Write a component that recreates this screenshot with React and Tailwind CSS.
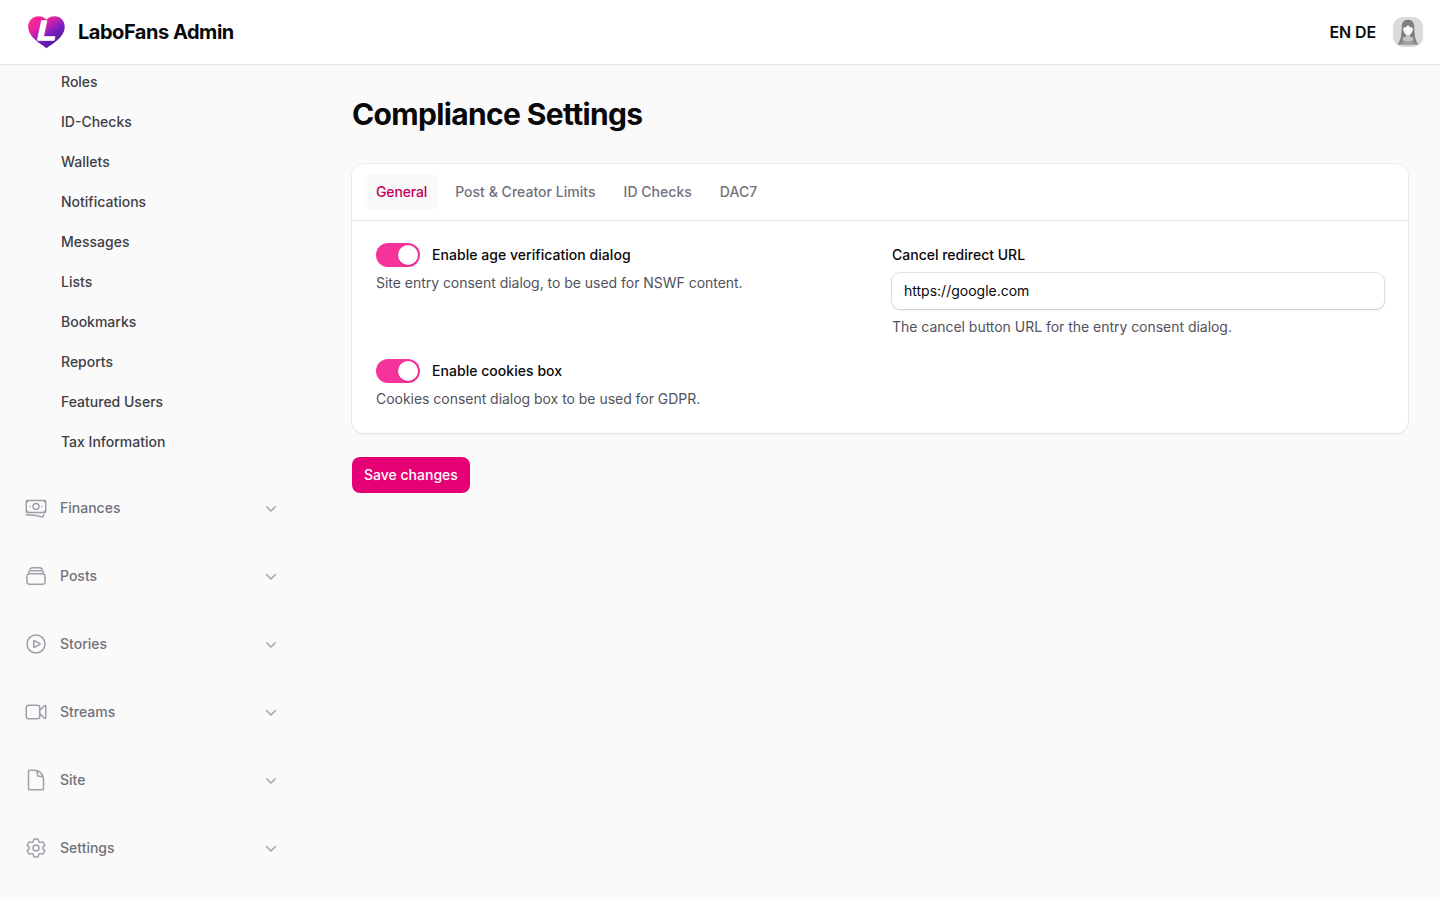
import React, { useState } from 'react';
import {
  HiOutlineBanknotes,
  HiOutlineRectangleStack,
  HiOutlinePlayCircle,
  HiOutlineVideoCamera,
  HiOutlineDocument,
  HiOutlineCog6Tooth,
  HiMiniChevronDown,
} from 'react-icons/hi2';

const userLinks = [
  'Roles',
  'ID-Checks',
  'Wallets',
  'Notifications',
  'Messages',
  'Lists',
  'Bookmarks',
  'Reports',
  'Featured Users',
  'Tax Information',
];

const groups = [
  { label: 'Finances', icon: HiOutlineBanknotes },
  { label: 'Posts', icon: HiOutlineRectangleStack },
  { label: 'Stories', icon: HiOutlinePlayCircle },
  { label: 'Streams', icon: HiOutlineVideoCamera },
  { label: 'Site', icon: HiOutlineDocument },
  { label: 'Settings', icon: HiOutlineCog6Tooth },
];

const tabs = ['General', 'Post & Creator Limits', 'ID Checks', 'DAC7'];

const Logo = () => (
  <svg className="h-[33px] w-[37px]" viewBox="0 0 37 33">
    <defs>
      <linearGradient id="heart" x1="6" y1="2" x2="25" y2="30" gradientUnits="userSpaceOnUse">
        <stop offset="0" stopColor="#ff2a93" />
        <stop offset="0.3" stopColor="#e0229f" />
        <stop offset="0.65" stopColor="#7a1fc4" />
        <stop offset="1" stopColor="#4c1d95" />
      </linearGradient>
    </defs>
    <path
      d="M18.5 3.7C16.6 1.3 13.6.2 10.4.2 4.7.2.2 4.6.2 10.4c0 5.4 2.7 9.3 7.3 13.7 3.3 3.1 7 5.200 11 8.100 4-2.900 7.700-5 11-8.100 4.600-4.400 7.200-8.300 7.200-13.700C36.700 4.600 32.300.2 26.600.2c-3.200 0-6.200 1.100-8.100 3.500z"
      fill="url(#heart)"
    />
    <text
      transform="translate(9.3 24.2) scale(1.15 1)"
      fill="#fff"
      stroke="#fff"
      strokeWidth="1.3"
      strokeLinejoin="round"
      fontSize="27"
      fontWeight="700"
      fontStyle="italic"
      fontFamily="Liberation Sans, sans-serif"
    >
      L
    </text>
  </svg>
);

const Avatar = () => (
  <svg className="h-8 w-8" viewBox="0 0 32 32">
    <defs>
      <clipPath id="avatar">
        <rect x="1" y="1" width="30" height="30" rx="10" />
      </clipPath>
    </defs>
    <g clipPath="url(#avatar)">
      <rect width="32" height="32" fill="#dadada" />
      <path d="M16 3.800c-4 0-6.300 2.800-6.300 7 0 7-.7 13-4 17.800h20.600c-3.300-4.800-4-10.800-4-17.800 0-4.200-2.300-7-6.300-7z" fill="#7f7f7f" />
      <path d="M14 17h4v3.500c2 .5 3.500 1 3.500 2.200 0 1.800-2.500 3-5.500 3s-5.500-1.200-5.500-3c0-1.200 1.500-1.700 3.500-2.200z" fill="#c4c4c4" />
      <path d="M9.500 28.600c0-2.600.5-4 1.500-5 1 1.800 3 2.600 5 2.600s4-.8 5-2.600c1 1 1.500 2.400 1.500 5z" fill="#9b9f9d" />
      <path d="M16 9c-1.200 1.700-3.300 2.600-5 3 .2 3.900 2.300 7.200 5 7.200s4.800-3.300 5-7.200c-1.700-.4-3.800-1.300-5-3z" fill="#f7f7f7" />
    </g>
  </svg>
);

const Toggle = ({ label, hint }) => {
  const [on, setOn] = useState(true);

  return (
    <div className="flex flex-col gap-2">
      <div className="flex h-5 items-center gap-3">
        <button
          type="button"
          role="switch"
          aria-checked={on}
          aria-label={label}
          onClick={() => setOn(!on)}
          className={`flex h-6 w-11 shrink-0 items-center rounded-full p-0.5 ${on ? 'justify-end bg-[#f6339a]' : 'bg-gray-200'}`}
        >
          <span className="h-5 w-5 rounded-full bg-white shadow-sm" />
        </button>
        <span className="text-sm font-medium tracking-[0.04px] text-[#09090b]">{label}</span>
      </div>
      <p className="text-sm tracking-[-0.03px] text-[#52525c]">{hint}</p>
    </div>
  );
};

const App = () => {
  const [activeTab, setActiveTab] = useState('General');
  const [url, setUrl] = useState('https://google.com');

  return (
    <div className="flex h-screen flex-col overflow-hidden bg-[#fafafa] font-['Inter',sans-serif] text-[#09090b]">
      <header className="z-10 flex h-16 shrink-0 items-center justify-between bg-white pr-4 pl-7 shadow-xs ring-1 ring-[#09090b]/5">
        <div className="flex items-center gap-[13px]">
          <Logo />
          <span className="text-xl font-bold tracking-[-0.47px]">LaboFans Admin</span>
        </div>
        <div className="flex items-center gap-4">
          <span className="font-semibold tracking-[-0.1px]">EN DE</span>
          <Avatar />
        </div>
      </header>

      <div className="flex min-h-0 flex-1">
        <nav className="flex w-80 shrink-0 flex-col gap-7 overflow-hidden px-6">
          <ul className="flex flex-col gap-1">
            {userLinks.map((link) => (
              <li key={link} className="flex h-9 items-center pl-[37px] text-sm font-medium text-[#3f3f46]">
                {link}
              </li>
            ))}
          </ul>
          {groups.map(({ label, icon: Icon }) => (
            <div key={label} className="flex h-10 shrink-0 items-center gap-3 pr-[15px]">
              <Icon className="h-6 w-6 text-[#9f9fa9]" />
              <span className="flex-1 text-sm font-medium text-[#71717b]">{label}</span>
              <HiMiniChevronDown className="h-5 w-5 text-[#9f9fa9]" />
            </div>
          ))}
        </nav>

        <main className="flex flex-1 flex-col gap-8 p-8">
          <h1 className="text-3xl font-bold tracking-[-0.65px]">Compliance Settings</h1>

          <form className="flex flex-col items-start gap-6" onSubmit={(e) => e.preventDefault()}>
            <section className="w-full rounded-xl bg-white shadow-xs ring-1 ring-[#09090b]/5">
              <div className="flex gap-1 border-b border-gray-200 px-3 py-2.5">
                {tabs.map((tab) => (
                  <button
                    key={tab}
                    type="button"
                    onClick={() => setActiveTab(tab)}
                    className={`rounded-lg px-3 py-2 text-sm font-medium ${tab === activeTab ? 'bg-[#fafafa] tracking-[-0.15px] text-[#c6005c]' : 'tracking-[0.03px] text-[#71717b]'}`}
                  >
                    {tab}
                  </button>
                ))}
              </div>

              <div className="grid grid-cols-2 gap-6 p-6">
                <Toggle
                  label="Enable age verification dialog"
                  hint="Site entry consent dialog, to be used for NSWF content."
                />
                <div className="flex flex-col gap-2">
                  <label htmlFor="redirect" className="text-sm font-medium">Cancel redirect URL</label>
                  <input
                    id="redirect"
                    value={url}
                    onChange={(e) => setUrl(e.target.value)}
                    className="h-9 w-full rounded-lg bg-white px-3 pb-px text-sm shadow-sm ring-1 ring-[#09090b]/10 outline-none"
                  />
                  <p className="text-sm tracking-[-0.03px] text-[#52525c]">The cancel button URL for the entry consent dialog.</p>
                </div>
                <Toggle
                  label="Enable cookies box"
                  hint="Cookies consent dialog box to be used for GDPR."
                />
              </div>
            </section>

            <button type="submit" className="h-9 rounded-lg bg-[#e60076] px-3 text-sm font-medium text-white">
              Save changes
            </button>
          </form>
        </main>
      </div>
    </div>
  );
};

export default App;
